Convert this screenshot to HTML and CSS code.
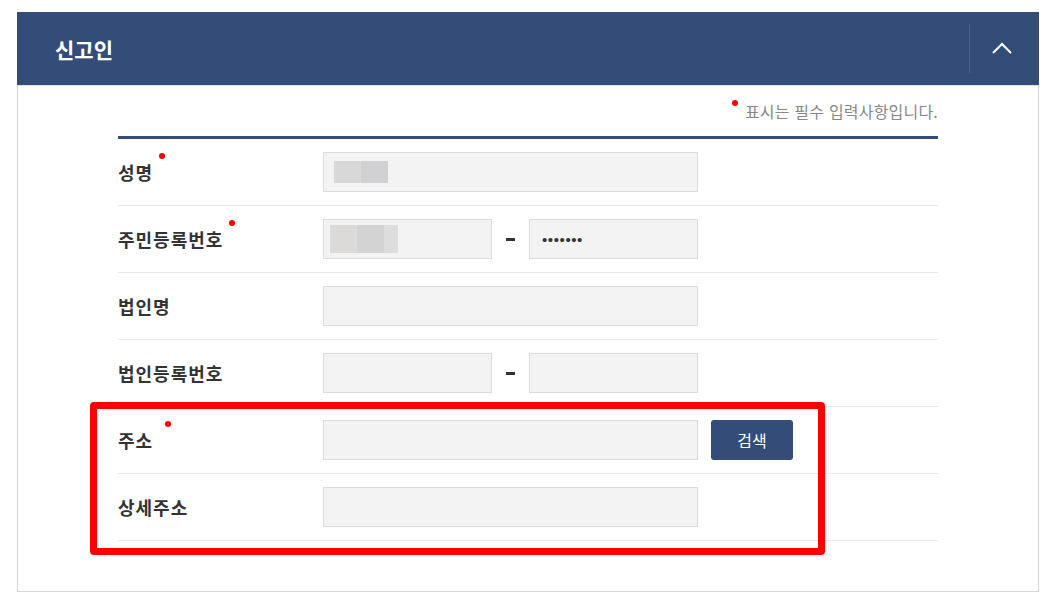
FILE: index.html
```html
<!DOCTYPE html>
<html lang="ko">
<head>
  <meta charset="UTF-8">
  <meta name="viewport" content="width=device-width, initial-scale=1.0">
  <title>신고인</title>
  <link rel="stylesheet" href="styles.css">
</head>
<body>
  <div class="panel">
    <div class="panel-head">
      <h2 class="panel-title">신고인</h2>
      <button type="button" class="toggle" aria-label="접기">
        <svg width="20" height="12" viewBox="0 0 20 12">
          <path d="M1 11 L10 2 L19 11" fill="none" stroke="#fff" stroke-width="2"/>
        </svg>
      </button>
    </div>

    <div class="panel-body">
      <p class="note"><span class="dot"></span>표시는 필수 입력사항입니다.</p>

      <div class="form-table">
        <div class="row">
          <div class="label">성명<span class="dot"></span></div>
          <div class="cells">
            <div class="field">
              <span class="blur blur-a"></span><span class="blur blur-b"></span>
            </div>
          </div>
        </div>

        <div class="row">
          <div class="label">주민등록번호<span class="dot"></span></div>
          <div class="cells">
            <div class="field field-sm field-blur-tall">
              <span class="blur blur-c"></span><span class="blur blur-d"></span><span class="blur blur-e"></span>
            </div>
            <span class="dash"></span>
            <div class="field field-sm"><span class="pw">•••••••</span></div>
          </div>
        </div>

        <div class="row">
          <div class="label">법인명</div>
          <div class="cells">
            <div class="field"></div>
          </div>
        </div>

        <div class="row">
          <div class="label">법인등록번호</div>
          <div class="cells">
            <div class="field field-sm"></div>
            <span class="dash"></span>
            <div class="field field-sm"></div>
          </div>
        </div>

        <div class="row">
          <div class="label">주소<span class="dot dot-far"></span></div>
          <div class="cells">
            <div class="field"></div>
            <button type="button" class="btn-search">검색</button>
          </div>
        </div>

        <div class="row">
          <div class="label">상세주소</div>
          <div class="cells">
            <div class="field"></div>
          </div>
        </div>

        <div class="highlight"></div>
      </div>
    </div>
  </div>
</body>
</html>
```

FILE: styles.css
```css
/* General styles */
body {
  margin: 0;
  padding: 12px 0 0 17px;
  background: #fff;
  color: #333;
  font-family: "Noto Sans CJK KR", "Noto Sans", sans-serif;
}

.panel {
  width: 1022px;
}

/* Header bar */
.panel-head {
  display: flex;
  align-items: center;
  height: 73px;
  background: #344d78;
}

.panel-title {
  flex: 1;
  margin: 0;
  padding-left: 38px;
  font-size: 21px;
  font-weight: 700;
  color: #fff;
}

.toggle {
  display: flex;
  align-items: center;
  justify-content: center;
  width: 69px;
  height: 49px;
  margin-right: 1px;
  padding: 0 4px 2px 0;
  border: 0;
  border-left: 1px solid #4b618a;
  background: transparent;
  cursor: pointer;
}

/* Body */
.panel-body {
  height: 505px;
  padding: 0 100px;
  border: 1px solid #d6d6d6;
  border-top-color: #e2e2e2;
}

.note {
  display: flex;
  justify-content: flex-end;
  align-items: flex-start;
  margin: 13px 0 13px;
  font-size: 16px;
  line-height: 24px;
  color: #888;
  letter-spacing: 0.2px;
}

.note .dot {
  margin: 1px 7px 0 0;
}

.dot {
  display: inline-block;
  width: 6px;
  height: 6px;
  border-radius: 50%;
  background: #f00;
  margin-left: 6px;
  margin-top: -7px;
}

.dot-far {
  margin-left: 12px;
}

/* Form table */
.form-table {
  position: relative;
  border-top: 3px solid #344d78;
}

.row {
  display: grid;
  grid-template-columns: 205px 1fr;
  align-items: center;
  height: 66px;
  border-bottom: 1px solid #e9e9e9;
}

.label {
  display: inline-flex;
  align-items: flex-start;
  font-size: 18px;
  font-weight: 700;
  line-height: 24px;
  color: #333;
  letter-spacing: 1px;
}

.cells {
  display: flex;
  align-items: center;
}

.field {
  box-sizing: border-box;
  display: flex;
  align-items: center;
  width: 375px;
  height: 40px;
  padding-left: 10px;
  border: 1px solid #dcdcdc;
  background: #f3f3f3;
}

.field-sm {
  width: 169px;
}

.field-blur-tall {
  padding-left: 6px;
}

.blur {
  display: inline-block;
  height: 22px;
}

.blur-a { width: 27px; background: #d8d8d8; }
.blur-b { width: 27px; background: #d1d1d3; }
.blur-c { width: 27px; height: 28px; background: #dbdad8; }
.blur-d { width: 27px; height: 28px; background: #d3d3d3; }
.blur-e { width: 14px; height: 28px; background: #dddddd; }

.pw {
  padding-left: 2px;
  font-family: "Liberation Sans", sans-serif;
  font-size: 15px;
  letter-spacing: 0.6px;
  color: #333;
}

.dash {
  display: flex;
  justify-content: center;
  width: 37px;
}

.dash::before {
  content: "";
  width: 9px;
  height: 3px;
  background: #333;
}

.btn-search {
  width: 82px;
  height: 40px;
  margin-left: 13px;
  border: 0;
  border-radius: 3px;
  background: #344d78;
  color: #fff;
  font-family: inherit;
  font-size: 16px;
  cursor: pointer;
}

/* Red callout drawn over the address rows */
.highlight {
  position: absolute;
  left: -28px;
  top: 263px;
  width: 735px;
  height: 153px;
  box-sizing: border-box;
  border: 7px solid #f00;
  border-radius: 4px;
  pointer-events: none;
}
```
